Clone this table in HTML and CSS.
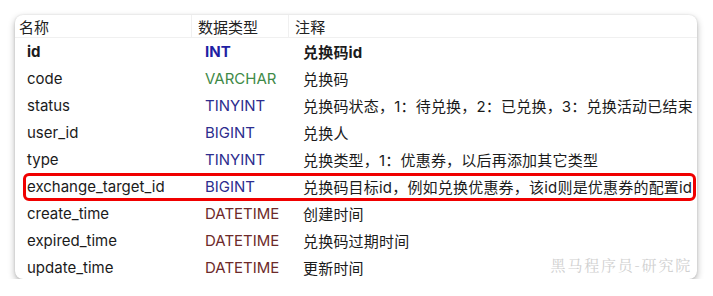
FILE: index.html
```html
<!DOCTYPE html>
<html lang="zh">
<head>
<meta charset="utf-8">
<link rel="stylesheet" href="styles.css">
</head>
<body>
<div class="card">
  <div class="row head">
    <div class="c1">名称</div>
    <div class="c2">数据类型</div>
    <div class="c3">注释</div>
  </div>
  <div class="row pk">
    <div class="c1">id</div>
    <div class="c2 t-int">INT</div>
    <div class="c3">兑换码id</div>
  </div>
  <div class="row">
    <div class="c1">code</div>
    <div class="c2 t-var">VARCHAR</div>
    <div class="c3">兑换码</div>
  </div>
  <div class="row">
    <div class="c1">status</div>
    <div class="c2 t-num">TINYINT</div>
    <div class="c3">兑换码状态，1：待兑换，2：已兑换，3：兑换活动已结束</div>
  </div>
  <div class="row">
    <div class="c1">user_id</div>
    <div class="c2 t-num">BIGINT</div>
    <div class="c3">兑换人</div>
  </div>
  <div class="row">
    <div class="c1">type</div>
    <div class="c2 t-num">TINYINT</div>
    <div class="c3">兑换类型，1：优惠券，以后再添加其它类型</div>
  </div>
  <div class="row mark">
    <div class="c1">exchange_target_id</div>
    <div class="c2 t-num">BIGINT</div>
    <div class="c3">兑换码目标id，例如兑换优惠券，该id则是优惠券的配置id</div>
  </div>
  <div class="row">
    <div class="c1">create_time</div>
    <div class="c2 t-date">DATETIME</div>
    <div class="c3">创建时间</div>
  </div>
  <div class="row">
    <div class="c1">expired_time</div>
    <div class="c2 t-date">DATETIME</div>
    <div class="c3">兑换码过期时间</div>
  </div>
  <div class="row">
    <div class="c1">update_time</div>
    <div class="c2 t-date">DATETIME</div>
    <div class="c3">更新时间</div>
  </div>
  <div class="watermark">黑马程序员-研究院</div>
</div>
</body>
</html>
```
FILE: styles.css
```css
html, body {
  margin: 0;
  padding: 0;
  background: #ffffff;
}
body {
  padding: 15px 16px 0 15px;
  font-family: "Inter", "Noto Sans CJK SC", sans-serif;
  font-size: 15px;
  color: #1b1b1b;
}
.card {
  position: relative;
  width: 682px;
  height: 264px;
  background: #fff;
  border-radius: 8px;
  box-shadow: 0 3px 7px rgba(0,0,0,0.3), 0 0 2px rgba(0,0,0,0.12);
}
.row {
  display: grid;
  grid-template-columns: 177px 97px 1fr;
  height: 27px;
  align-items: center;
  white-space: nowrap;
}
.row .c1 { padding-left: 12px; }
.row .c2 { padding-left: 13px; }
.row .c3 { padding-left: 14px; }
.row .c3 { letter-spacing: 0.2px; }
.row.head {
  height: 22px;
  border-bottom: 1px solid #f0f0f0;
  color: #222;
  align-items: stretch;
}
.row.head > div {
  display: flex;
  align-items: center;
}
.row.head .c1 { padding-left: 4px; border-right: 1px solid #f0f0f0; }
.row.head .c2 { padding-left: 6px; border-right: 1px solid #f0f0f0; }
.row.head .c3 { padding-left: 6px; }
.row.pk { font-weight: bold; }
.t-int { color: #1f1fa3; }
.t-var { color: #3f8a48; }
.t-num { color: #2d2d8e; }
.t-date { color: #6d2a2a; }
.row.mark { position: relative; }
.row.mark::after {
  content: "";
  position: absolute;
  top: 0;
  bottom: -1px;
  left: 8px;
  right: 1px;
  border: 3px solid #f00000;
  border-radius: 6px;
}
.watermark {
  position: absolute;
  right: 5px;
  bottom: 4px;
  font-family: "Noto Serif CJK SC", "Noto Sans CJK SC", serif;
  font-size: 15px;
  letter-spacing: 1.8px;
  color: #d0d0d0;
}
```
